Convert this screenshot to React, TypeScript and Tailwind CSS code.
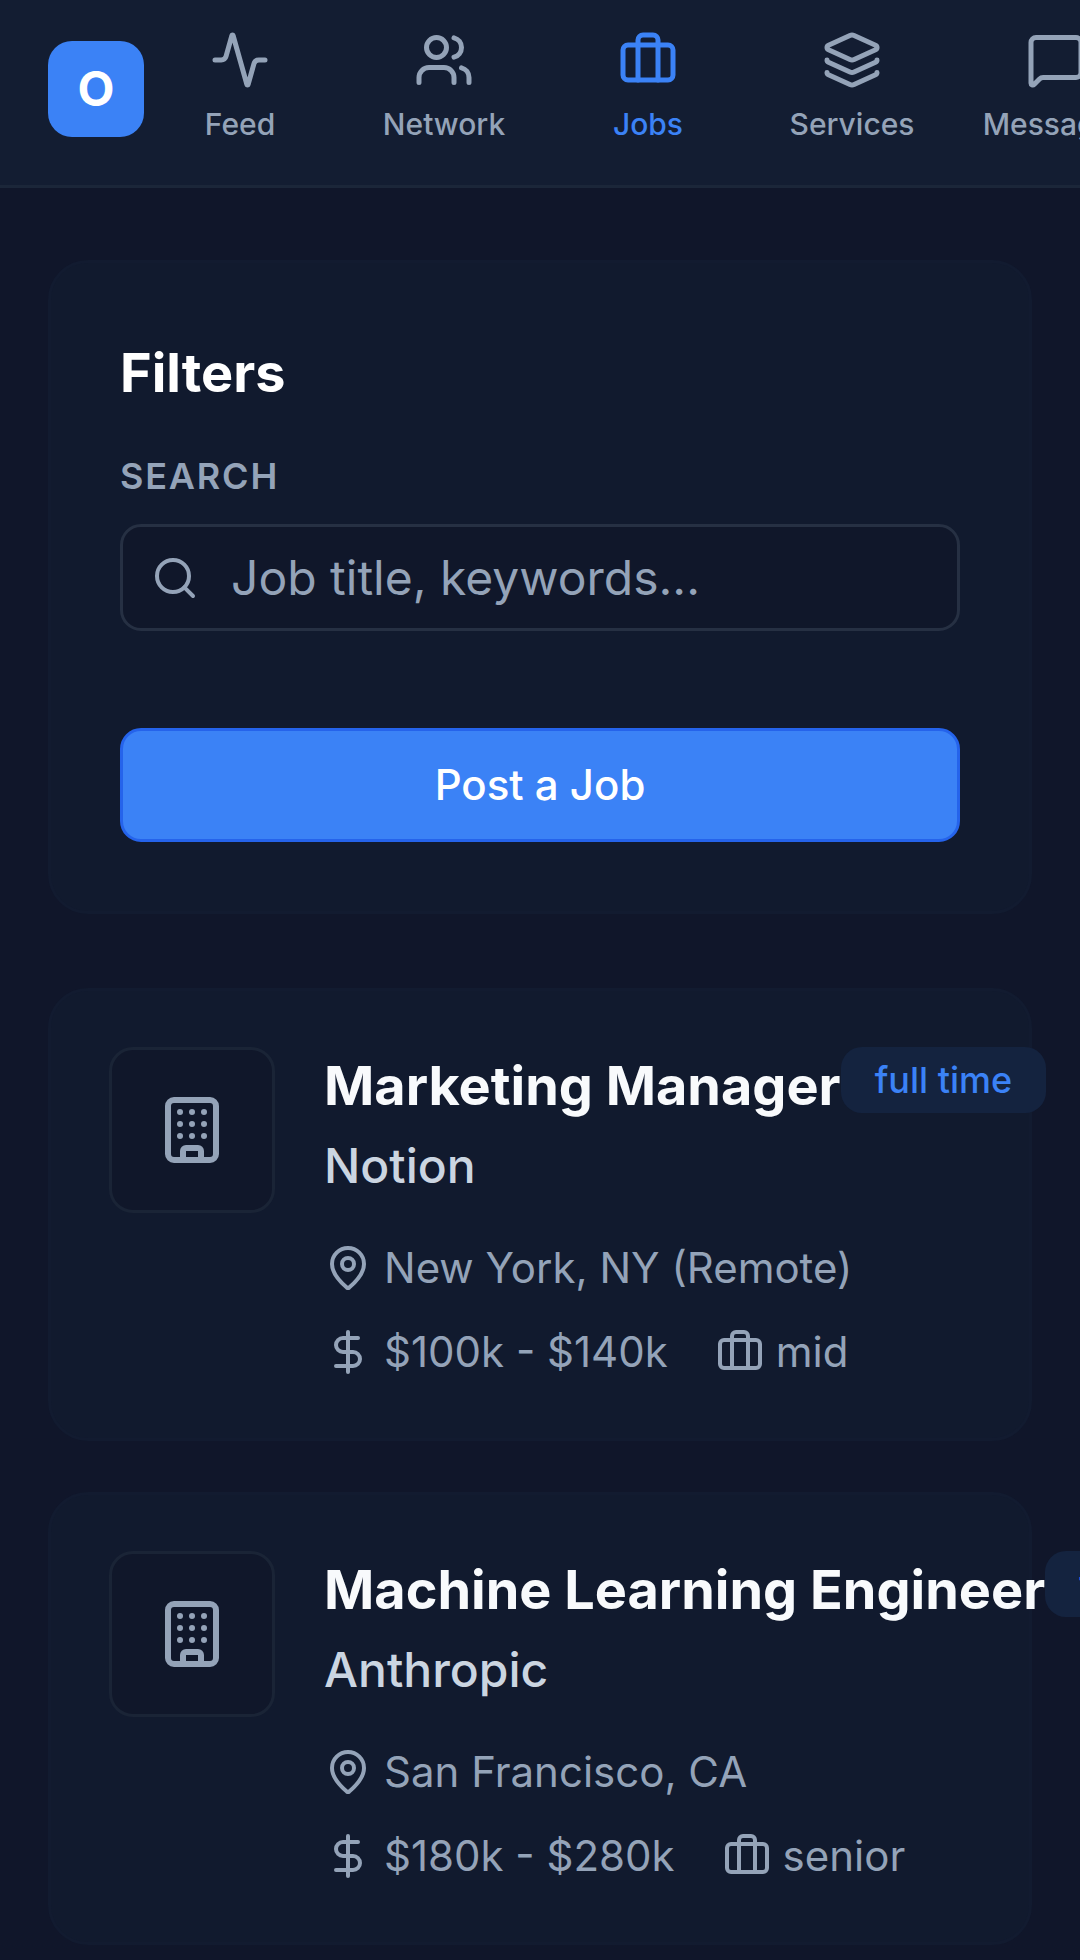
import { Activity, Briefcase, Building, DollarSign, Layers, MapPin, MessageSquare, Search, Users } from 'lucide-react';

const navItems = [
  { label: 'Feed', icon: Activity },
  { label: 'Network', icon: Users },
  { label: 'Jobs', icon: Briefcase, active: true },
  { label: 'Services', icon: Layers },
  { label: 'Messages', icon: MessageSquare },
];

const jobs = [
  { title: 'Marketing Manager', company: 'Notion', location: 'New York, NY (Remote)', salary: '$100k - $140k', level: 'mid' },
  { title: 'Machine Learning Engineer', company: 'Anthropic', location: 'San Francisco, CA', salary: '$180k - $280k', level: 'senior' },
];

function Header() {
  return (
    <header className="flex h-[188px] shrink-0 items-start border-b-[3px] border-[#1b2639] bg-[#131d32] pl-[48px]">
      <div className="mt-[41px] flex h-[96px] w-[96px] shrink-0 items-center justify-center rounded-[24px] bg-[#3b82f6] text-[48px] font-bold text-white">
        O
      </div>
      <nav className="ml-[6px] mt-[30px] flex gap-[24px]">
        {navItems.map((item) => {
          const Icon = item.icon;
          return (
            <div
              key={item.label}
              className={`flex w-[180px] shrink-0 flex-col items-center gap-[12px] whitespace-nowrap text-[30px] font-medium leading-[45px] ${item.active ? 'text-[#3b82f6]' : 'text-[#94a3b8]'}`}
            >
              <Icon size={60} strokeWidth={2} />
              <span>{item.label}</span>
            </div>
          );
        })}
      </nav>
    </header>
  );
}

function FiltersCard() {
  return (
    <section className="rounded-[40px] border-[3px] border-[#121b30] bg-[#111a2e] px-[69px] pb-[69px] pt-[71px]">
      <h2 className="text-[54px] font-bold leading-[78px] text-white">Filters</h2>
      <div className="mt-[37px] text-[36px] font-semibold uppercase leading-[54px] tracking-[1.8px] text-[#94a3b8]">Search</div>
      <div className="mt-[21px] flex h-[107px] items-center gap-[32px] rounded-[21px] border-[3px] border-[#263043] bg-[#10172a] px-[28px]">
        <Search size={48} strokeWidth={2} className="shrink-0 text-[#94a3b8]" />
        <span className="text-[48px] text-[#94a3b8]">Job title, keywords...</span>
      </div>
      <button className="mt-[97px] block h-[114px] w-full rounded-[21px] border-[3px] border-[#2563eb] bg-[#3b82f6] pb-[2px] text-[42px] font-medium text-white">
        Post a Job
      </button>
    </section>
  );
}

function JobCard({ job }: { job: (typeof jobs)[number] }) {
  return (
    <article className="flex h-[453px] gap-[49px] rounded-[40px] border-[3px] border-[#121b30] bg-[#111a2e] pl-[58px] pt-[56px]">
      <div className="flex h-[166px] w-[166px] shrink-0 items-center justify-center rounded-[24px] border-[3px] border-[#1a2436] bg-[#10172a]">
        <Building size={72} strokeWidth={2} className="text-[#94a3b8]" />
      </div>
      <div className="min-w-0">
        <div className="flex items-start">
          <h3 className="shrink-0 whitespace-nowrap text-[54px] font-bold leading-[78px] text-[#f8fafc]">{job.title}</h3>
          <span className="flex h-[66px] shrink-0 items-center rounded-[21px] bg-[#14233f] px-[34px] text-[36px] font-medium text-[#3b82f6]">
            full time
          </span>
        </div>
        <div className="mt-[5px] text-[48px] font-medium leading-[72px] text-[#cbd5e1]">{job.company}</div>
        <div className="mt-[34px] flex items-center gap-[12px] text-[42px] leading-[63px] text-[#94a3b8]">
          <MapPin size={48} strokeWidth={2} className="shrink-0" />
          <span>{job.location}</span>
        </div>
        <div className="mt-[21px] flex items-center gap-[48px] text-[42px] leading-[63px] text-[#94a3b8]">
          <div className="flex items-center gap-[12px]">
            <DollarSign size={48} strokeWidth={2} className="shrink-0" />
            <span>{job.salary}</span>
          </div>
          <div className="flex items-center gap-[12px]">
            <Briefcase size={48} strokeWidth={2} className="shrink-0" />
            <span>{job.level}</span>
          </div>
        </div>
      </div>
    </article>
  );
}

export default function App() {
  return (
    <div className="flex h-[1960px] w-[1080px] flex-col overflow-hidden bg-[#10162a] font-['Inter',sans-serif]">
      <Header />
      <main className="flex flex-col gap-[74px] px-[48px] pt-[72px]">
        <FiltersCard />
        <div className="flex flex-col gap-[51px]">
          {jobs.map((job) => (
            <JobCard key={job.title} job={job} />
          ))}
        </div>
      </main>
    </div>
  );
}
